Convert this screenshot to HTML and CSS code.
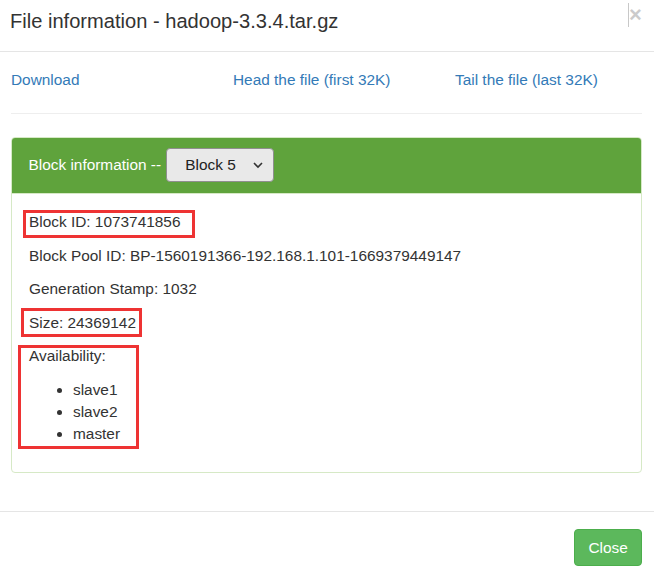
FILE: index.html
```html
<!DOCTYPE html>
<html>
<head>
<meta charset="utf-8">
<link rel="stylesheet" href="styles.css">
</head>
<body>
<div class="modal">
  <div class="modal-header">
    <h4 class="modal-title">File information - hadoop-3.3.4.tar.gz</h4>
    <span class="close-bar"></span>
    <span class="close">&times;</span>
  </div>
  <div class="modal-body">
    <div class="links">
      <a href="#">Download</a>
      <a href="#">Head the file (first 32K)</a>
      <a href="#">Tail the file (last 32K)</a>
    </div>
    <hr>
    <div class="panel">
      <div class="panel-heading">
        <span>Block information -- </span>
        <div class="select">
          <span>Block 5</span>
          <svg width="12" height="8" viewBox="0 0 12 8"><path d="M2 2 L6 6 L10 2" fill="none" stroke="#333" stroke-width="1.6"/></svg>
        </div>
      </div>
      <div class="panel-body">
        <p class="mark mark-id">Block ID: 1073741856</p>
        <p>Block Pool ID: BP-1560191366-192.168.1.101-1669379449147</p>
        <p>Generation Stamp: 1032</p>
        <p class="mark mark-size">Size: 24369142</p>
        <div class="mark mark-avail">
          <p>Availability:</p>
          <ul>
            <li>slave1</li>
            <li>slave2</li>
            <li>master</li>
          </ul>
        </div>
      </div>
    </div>
  </div>
  <div class="modal-footer">
    <button class="btn">Close</button>
  </div>
</div>
</body>
</html>
```
FILE: styles.css
```css
*, *::before, *::after { box-sizing: border-box; }
html, body {
  margin: 0;
  padding: 0;
  background: #fff;
}
body {
  font-family: "Liberation Sans", Arial, sans-serif;
  font-size: 15.4px;
  line-height: 22px;
  color: #333;
}
.modal {
  width: 654px;
  height: 578px;
  background: #fff;
}
.modal-header {
  position: relative;
  padding: 7px 12px 16px 10px;
  border-bottom: 1px solid #e5e5e5;
}
.modal-title {
  margin: 0;
  font-size: 20.1px;
  font-weight: normal;
  line-height: 28px;
  color: #333;
}
.close-bar {
  position: absolute;
  left: 628px;
  top: 3px;
  width: 1px;
  height: 24px;
  background: #c8c8c8;
}
.close {
  position: absolute;
  left: 629px;
  top: 1px;
  font-size: 22px;
  font-weight: bold;
  line-height: 28px;
  color: #000;
  opacity: 0.2;
}
.modal-body {
  padding: 16.5px 12px 16.5px 11px;
}
.links {
  display: grid;
  grid-template-columns: 222px 222px 1fr;
}
.links a {
  color: #337ab7;
  text-decoration: none;
}
hr {
  margin: 22px 0 23px;
  border: 0;
  border-top: 1px solid #eee;
}
.panel {
  border: 1px solid #d6e9c6;
  border-radius: 4px;
  margin-bottom: 22px;
}
.panel-heading {
  display: flex;
  align-items: center;
  background: #5fa33c;
  color: #fff;
  padding: 10px 16.5px 11px;
  border-top-left-radius: 3px;
  border-top-right-radius: 3px;
  border-bottom: 1px solid #d6e9c6;
}
.panel-heading > span {
  white-space: pre;
}
.select {
  display: flex;
  align-items: center;
  justify-content: space-between;
  width: 108px;
  height: 34px;
  margin-left: 1px;
  padding: 0 9px 0 18px;
  background: #e9e9e9;
  border: 1px solid #8f8f8f;
  border-radius: 4px;
  color: #222;
}
.panel-body {
  padding: 17.5px 16.5px 16px 17px;
}
p {
  margin: 0 0 11.5px;
}
ul {
  margin: 0 0 11px;
  padding-left: 44px;
}
.mark {
  position: relative;
}
.mark::after {
  content: "";
  position: absolute;
  border: 3px solid #ee3333;
}
.mark-id::after {
  left: -6px;
  top: -1.5px;
  width: 172px;
  height: 28px;
}
.mark-size::after {
  left: -8px;
  top: -4px;
  width: 121px;
  height: 29px;
}
.mark-avail::after {
  left: -11px;
  top: 0;
  width: 121px;
  height: 104px;
}
.modal-footer {
  display: flex;
  justify-content: flex-end;
  padding: 17px 12px 16px;
  border-top: 1px solid #e5e5e5;
}
.btn {
  font-family: "Liberation Sans", Arial, sans-serif;
  font-size: 15.4px;
  line-height: 22px;
  padding: 6.6px 13.2px;
  color: #fff;
  background: #5cb85c;
  border: 1px solid #4cae4c;
  border-radius: 4px;
}
```
